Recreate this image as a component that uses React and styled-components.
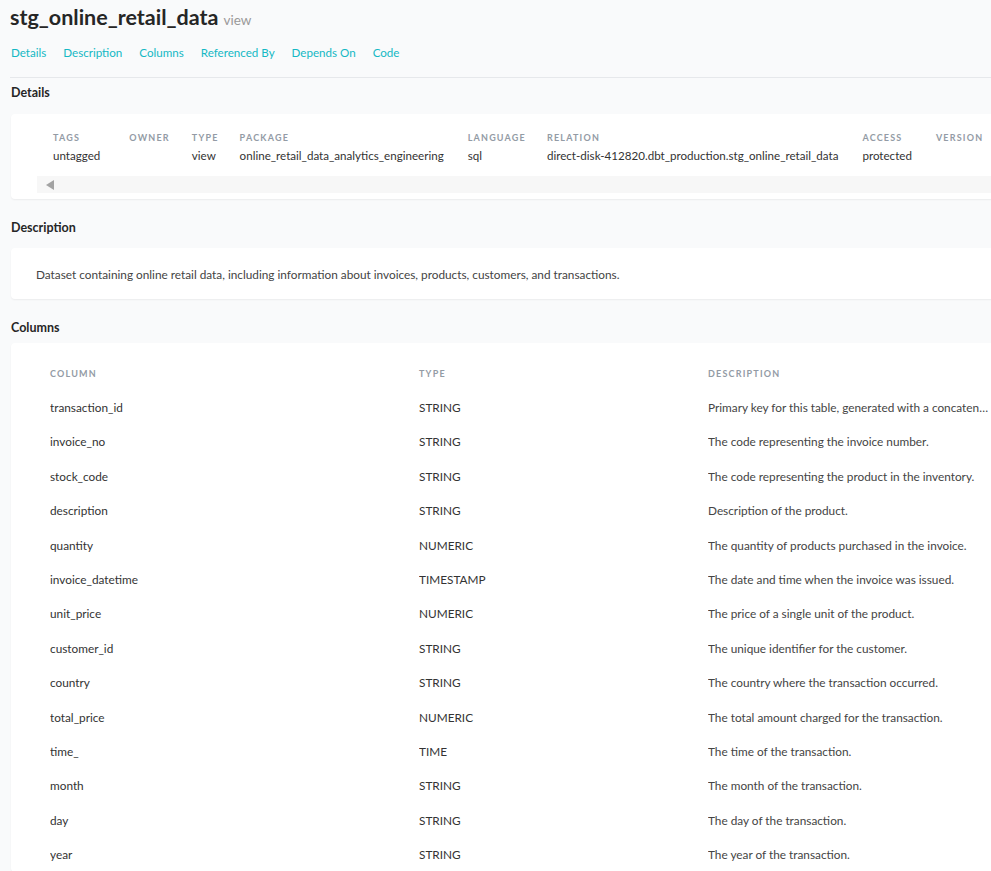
import React from 'react';
import styled, { createGlobalStyle } from 'styled-components';

const GlobalStyle = createGlobalStyle`
  html, body {
    margin: 0;
    padding: 0;
    background: #f9fafb;
    overflow: hidden;
  }
  body {
    font-family: Lato, "Open Sans", sans-serif;
    color: #333;
  }
`;

const Page = styled.div`
  padding: 0 0 0 10px;
  width: 1040px;
`;

const TitleRow = styled.div`
  display: flex;
  align-items: baseline;
  gap: 5px;
  padding-top: 4px;
`;

const Title = styled.h1`
  margin: 0;
  font-size: 21.5px;
  font-weight: 700;
  color: #262626;
`;

const Kind = styled.span`
  font-size: 13.5px;
  color: #999;
`;

const Nav = styled.nav`
  display: flex;
  gap: 17px;
  padding: 16px 0 18px 1px;
  border-bottom: 1px solid #e6e8eb;
`;

const NavLink = styled.a`
  font-size: 11.6px;
  color: #14b8c4;
  text-decoration: none;
`;

const SectionTitle = styled.h3`
  margin: 0;
  padding: ${p => p.top || 8}px 0 ${p => p.bottom || 13}px 1px;
  font-size: 12.5px;
  font-weight: 700;
  color: #262626;
`;

const Card = styled.div`
  background: #fff;
  border-radius: 4px;
  box-shadow: 0 1px 2px rgba(0, 0, 0, 0.06);
  margin-left: 1px;
  padding: ${p => p.pad};
`;

const Meta = styled.div`
  display: flex;
  padding: 0 0 0 16px;
`;

const MetaCell = styled.div`
  display: flex;
  flex-direction: column;
  gap: 4px;
  padding-right: ${p => p.gap}px;
  white-space: nowrap;
`;

const Label = styled.div`
  font-size: 9px;
  font-weight: 700;
  letter-spacing: 1.2px;
  text-transform: uppercase;
  color: #939ba5;
  line-height: 13px;
`;

const Value = styled.div`
  font-size: 11.6px;
  color: #333;
  line-height: 16px;
  min-height: 16px;
`;

const ScrollTrack = styled.div`
  margin-top: 12px;
  height: 17px;
  background: #f7f7f7;
  display: flex;
  align-items: center;
  padding-left: 9px;
`;

const Arrow = styled.div`
  width: 0;
  height: 0;
  border-top: 5px solid transparent;
  border-bottom: 5px solid transparent;
  border-right: 8px solid #a3a3a3;
`;

const Paragraph = styled.p`
  margin: 0;
  font-size: 11.8px;
  color: #444;
`;

const Grid = styled.div`
  display: grid;
  grid-template-columns: 369px 289px 280px;
  grid-auto-rows: 34.4px;
  align-items: center;
`;

const HeadCell = styled(Label)`
  padding-top: 1px;
`;

const Cell = styled.div`
  font-size: 11.8px;
  color: ${p => (p.muted ? '#444' : '#333')};
  white-space: nowrap;
  overflow: hidden;
  text-overflow: ellipsis;
`;

const meta = [
  ['Tags', 'untagged', 29],
  ['Owner', '', 22],
  ['Type', 'view', 21],
  ['Package', 'online_retail_data_analytics_engineering', 24],
  ['Language', 'sql', 21],
  ['Relation', 'direct-disk-412820.dbt_production.stg_online_retail_data', 24],
  ['Access', 'protected', 24],
  ['Version', '', 24],
];

const columns = [
  ['transaction_id', 'STRING', 'Primary key for this table, generated with a concatenation of invoice number and stock code.'],
  ['invoice_no', 'STRING', 'The code representing the invoice number.'],
  ['stock_code', 'STRING', 'The code representing the product in the inventory.'],
  ['description', 'STRING', 'Description of the product.'],
  ['quantity', 'NUMERIC', 'The quantity of products purchased in the invoice.'],
  ['invoice_datetime', 'TIMESTAMP', 'The date and time when the invoice was issued.'],
  ['unit_price', 'NUMERIC', 'The price of a single unit of the product.'],
  ['customer_id', 'STRING', 'The unique identifier for the customer.'],
  ['country', 'STRING', 'The country where the transaction occurred.'],
  ['total_price', 'NUMERIC', 'The total amount charged for the transaction.'],
  ['time_', 'TIME', 'The time of the transaction.'],
  ['month', 'STRING', 'The month of the transaction.'],
  ['day', 'STRING', 'The day of the transaction.'],
  ['year', 'STRING', 'The year of the transaction.'],
];

export default function App() {
  return (
    <Page>
      <GlobalStyle />
      <TitleRow>
        <Title>stg_online_retail_data</Title>
        <Kind>view</Kind>
      </TitleRow>
      <Nav>
        {['Details', 'Description', 'Columns', 'Referenced By', 'Depends On', 'Code'].map(n => (
          <NavLink key={n} href="#">{n}</NavLink>
        ))}
      </Nav>

      <SectionTitle top={7} bottom={14}>Details</SectionTitle>
      <Card pad="17px 0 6px 26px">
        <Meta>
          {meta.map(([k, v, gap]) => (
            <MetaCell key={k} gap={gap}>
              <Label>{k}</Label>
              <Value>{v}</Value>
            </MetaCell>
          ))}
        </Meta>
        <ScrollTrack>
          <Arrow />
        </ScrollTrack>
      </Card>

      <SectionTitle top={21}>Description</SectionTitle>
      <Card pad="19px 25px 17px">
        <Paragraph>
          Dataset containing online retail data, including information about invoices, products, customers, and transactions.
        </Paragraph>
      </Card>

      <SectionTitle top={21} bottom={8}>Columns</SectionTitle>
      <Card pad="13px 0 0 39px">
        <Grid>
          <HeadCell>Column</HeadCell>
          <HeadCell>Type</HeadCell>
          <HeadCell>Description</HeadCell>
          {columns.map(([name, type, desc]) => (
            <React.Fragment key={name}>
              <Cell>{name}</Cell>
              <Cell>{type}</Cell>
              <Cell muted>{desc}</Cell>
            </React.Fragment>
          ))}
        </Grid>
      </Card>
    </Page>
  );
}
